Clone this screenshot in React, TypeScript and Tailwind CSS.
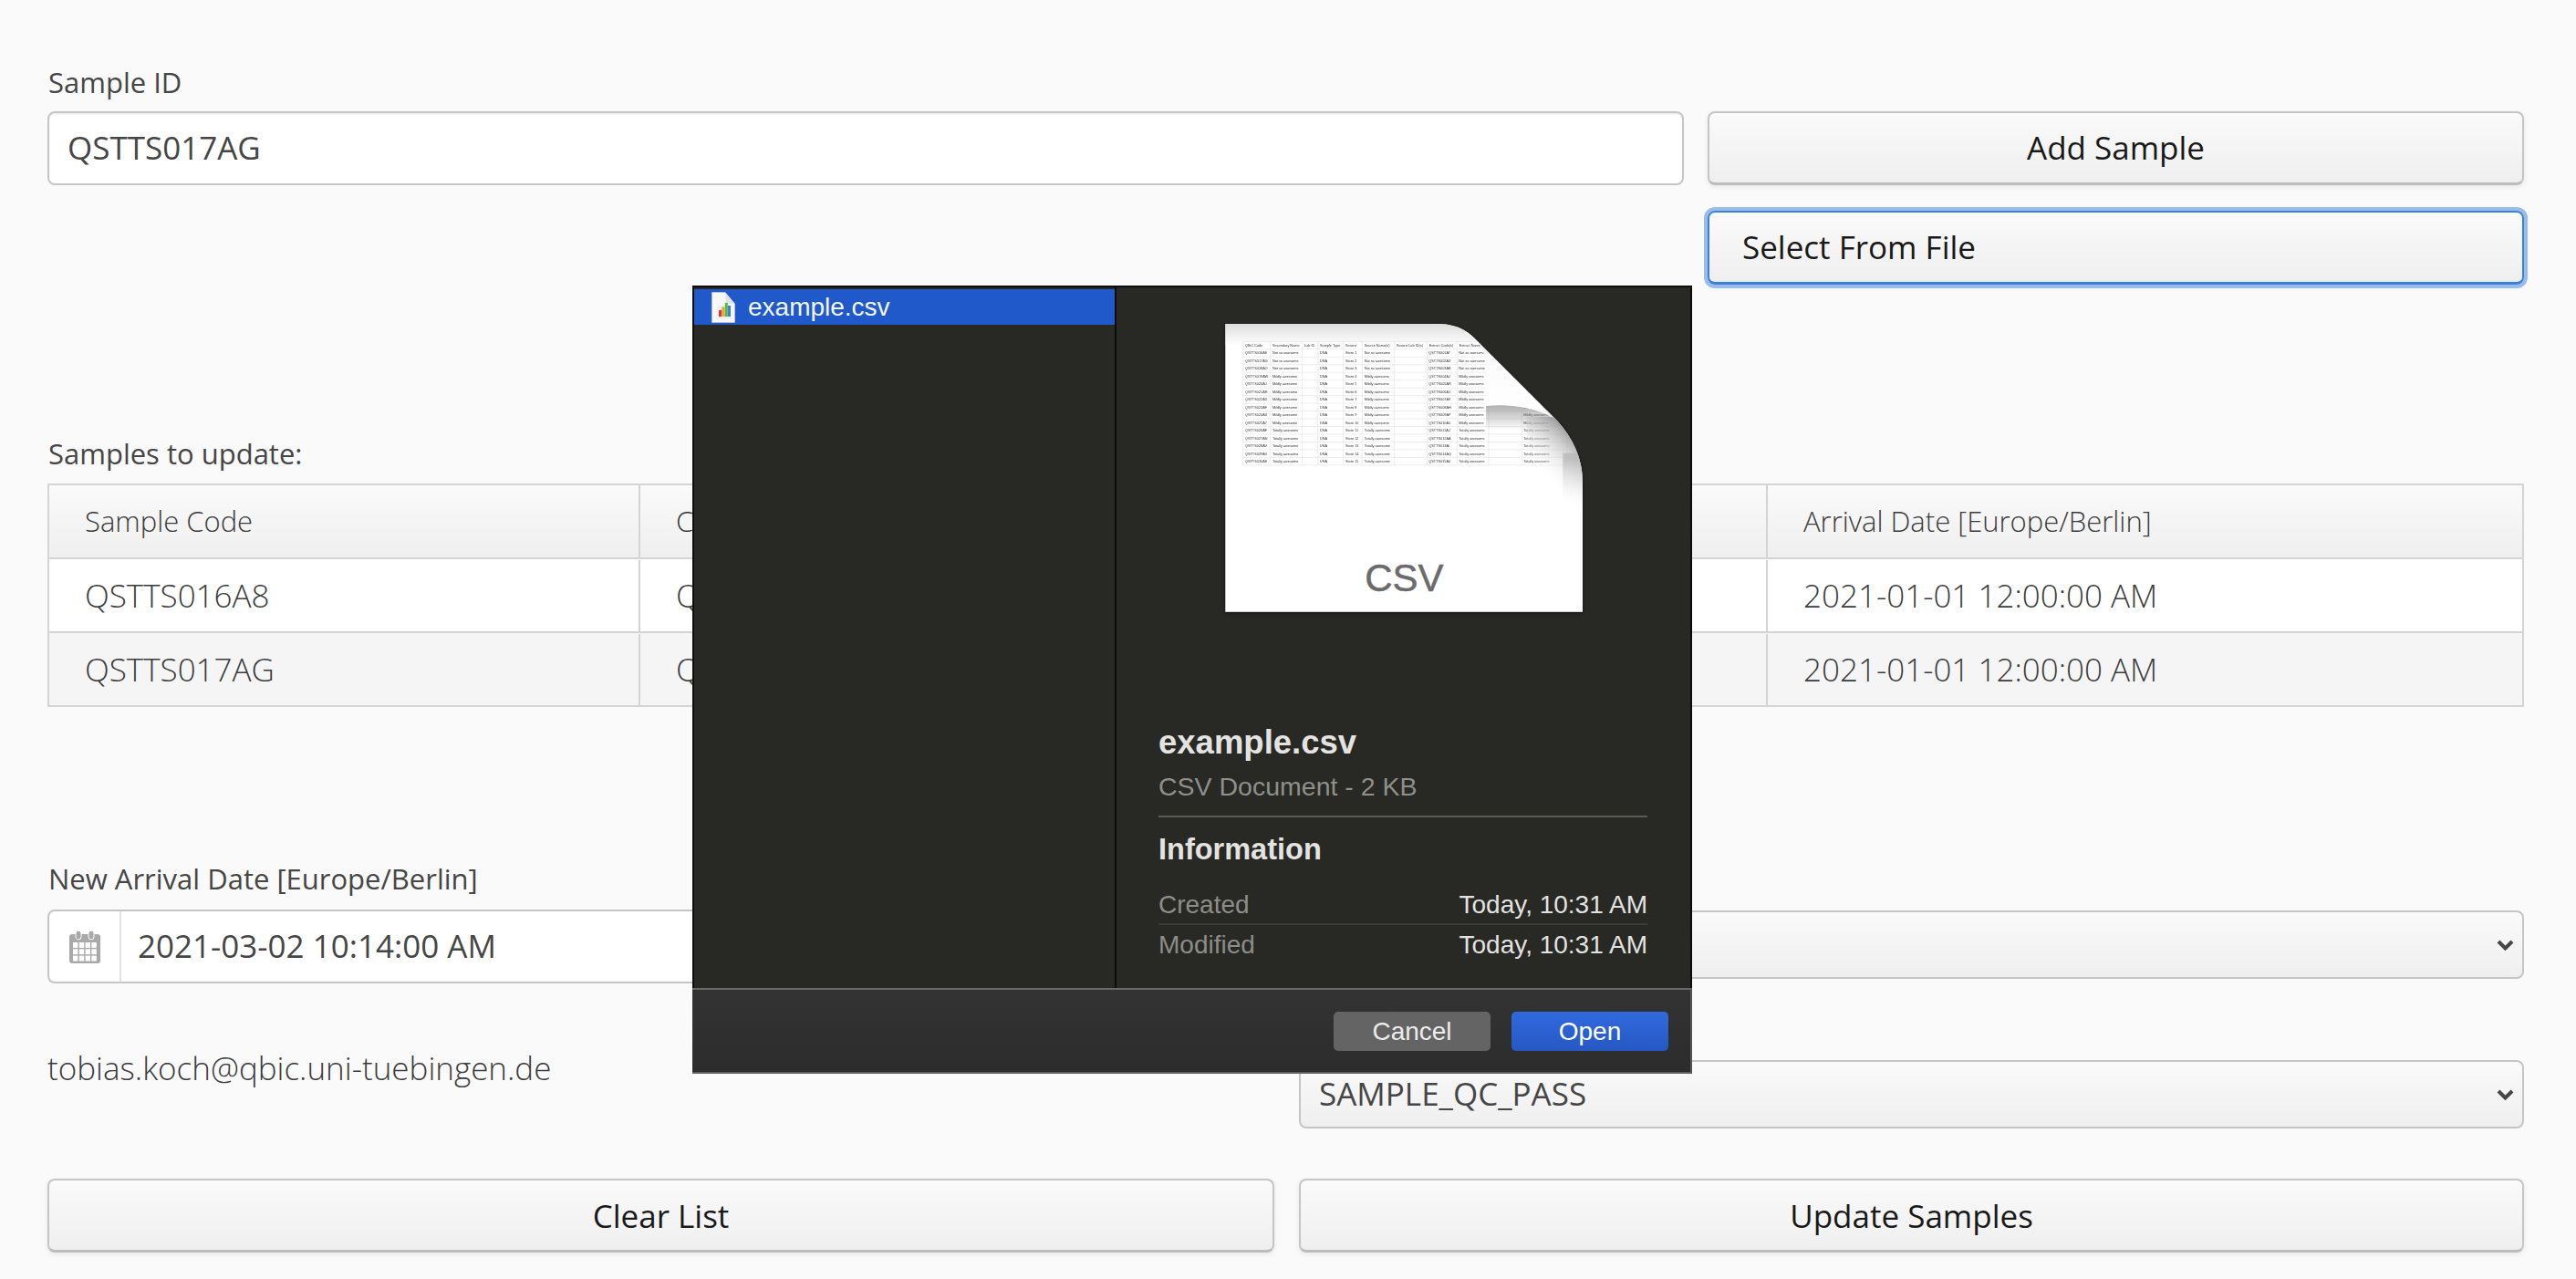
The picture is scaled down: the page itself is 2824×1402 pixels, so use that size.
import React from "react";

const BTN =
  "flex items-center justify-center h-[81px] rounded-[8px] border-2 border-b-[3px] border-[#c5c5c5] border-b-[#bcbcbc] bg-linear-to-b from-[#fafafa] to-[#efefef] text-[#191919] text-[35px] shadow-[0_2px_6px_rgba(0,0,0,0.08)] [font-family:'Open_Sans',sans-serif]";

function Chevron() {
  return (
    <svg width="19" height="12" viewBox="0 0 19 12" className="shrink-0">
      <path d="M2 2 L9.5 9.5 L17 2" fill="none" stroke="#464646" strokeWidth="4" />
    </svg>
  );
}

function SelectBox({ value }: { value?: string }) {
  return (
    <div className="flex items-center justify-between h-[75px] rounded-[8px] border-2 border-[#c5c5c5] bg-linear-to-b from-[#fafafa] to-[#efefef] pl-[20px] pr-[9px] text-[35px] text-[#464646]">
      <span>{value}</span>
      <Chevron />
    </div>
  );
}

function CalendarIcon() {
  const cells = [];
  for (let r = 0; r < 3; r++) {
    for (let c = 0; c < 4; c++) {
      cells.push(<rect key={`${r}-${c}`} x={4 + c * 6.8} y={13 + r * 7.3} width="5.4" height="5.9" fill="#fff" />);
    }
  }
  return (
    <svg width="34" height="36" viewBox="0 0 34 36">
      <rect x="0" y="4" width="34" height="32" rx="3" fill="#a9a9a9" />
      {cells}
      <rect x="7" y="0" width="6" height="10" rx="3" fill="#a9a9a9" stroke="#fff" strokeWidth="1" />
      <rect x="21" y="0" width="6" height="10" rx="3" fill="#a9a9a9" stroke="#fff" strokeWidth="1" />
    </svg>
  );
}

function SmallFile() {
  return (
    <svg width="26" height="34" viewBox="0 0 26 34" className="shrink-0">
      <path d="M0.5 0.5 H15 L25.5 13 V33.5 H0.5 Z" fill="#f7f7f7" stroke="#d0d0d0" strokeWidth="0.6" />
      <path d="M15 0.5 L25.5 13 H16 Z" fill="#e2e2e2" />
      <rect x="6" y="15" width="15" height="14" rx="2" fill="#ededed" />
      <rect x="8" y="20" width="3" height="7" fill="#d9363f" />
      <rect x="11.4" y="16.5" width="3" height="10.5" fill="#e9a52a" />
      <rect x="14.8" y="12" width="3" height="15" fill="#4fb848" />
      <rect x="18" y="15" width="3" height="12" fill="#3d7fd9" />
    </svg>
  );
}

const colX = [218, 308, 413, 464, 548, 610, 716, 823, 922, 1026, 1135, 1285];
const header = ["QBiC Code", "Secondary Name", "Lab ID", "Sample Type", "Source", "Source Name(s)", "Source Lab ID(s)", "Extract Code(s)", "Extract Name", "", "Extract"];
const codes = ["QSTTS016A8", "QSTTS017AG", "QSTTS018AO", "QSTTS019AW", "QSTTS020AJ", "QSTTS021AR", "QSTTS022AX", "QSTTS023AF", "QSTTS024AX", "QSTTS025A7", "QSTTS026AF", "QSTTS027AN", "QSTTS028AV", "QSTTS029A3", "QSTTS030A8"];
const ext = ["QSTTS001AT", "QSTTS002A3", "QSTTS003AB", "QSTTS004AJ", "QSTTS005AR", "QSTTS006A1", "QSTTS007A9", "QSTTS008AH", "QSTTS009AP", "QSTTS010A5", "QSTTS011AJ", "QSTTS012AA", "QSTTS013AI", "QSTTS014AQ", "QSTTS015A0"];
const kind = (i: number) => (i < 3 ? "Not so awesome" : i < 10 ? "Mildly awesome" : "Totally awesome");

function PreviewIcon() {
  const top = 133;
  const rowH = 25.4;
  const sheet = "M160 75 H850 C915 75 950 92 985 128 L1230 372 C1300 440 1335 510 1335 600 V1022 H160 Z";
  const f = { fontFamily: "'Liberation Sans', sans-serif", fontSize: 11.5, fill: "#333" };
  return (
    <svg width="470" height="360" viewBox="0 0 1410 1080" className="block">
      <defs>
        <linearGradient id="topShade" x1="0" y1="0" x2="0" y2="1">
          <stop offset="0" stopColor="#dedede" />
          <stop offset="1" stopColor="#ffffff" />
        </linearGradient>
        <linearGradient id="underFlap" gradientUnits="userSpaceOnUse" x1="0" y1="345" x2="0" y2="425">
          <stop offset="0" stopColor="#808080" stopOpacity="0.6" />
          <stop offset="1" stopColor="#808080" stopOpacity="0" />
        </linearGradient>
        <linearGradient id="sideShade" gradientUnits="userSpaceOnUse" x1="1320" y1="440" x2="1195" y2="570">
          <stop offset="0" stopColor="#8c8c8c" stopOpacity="0.95" />
          <stop offset="0.5" stopColor="#cfcfcf" stopOpacity="0.55" />
          <stop offset="1" stopColor="#ffffff" stopOpacity="0" />
        </linearGradient>
        <linearGradient id="sideFade" gradientUnits="userSpaceOnUse" x1="0" y1="520" x2="0" y2="680">
          <stop offset="0" stopColor="#b5b5b5" stopOpacity="0.7" />
          <stop offset="1" stopColor="#ffffff" stopOpacity="0" />
        </linearGradient>
        <linearGradient id="flap" gradientUnits="userSpaceOnUse" x1="0" y1="110" x2="0" y2="390">
          <stop offset="0" stopColor="#e4e4e4" />
          <stop offset="0.3" stopColor="#fbfbfb" />
          <stop offset="0.85" stopColor="#ffffff" />
          <stop offset="1" stopColor="#ececec" />
        </linearGradient>
        <filter id="sheetShadow" x="-10%" y="-10%" width="120%" height="120%">
          <feDropShadow dx="0" dy="4" stdDeviation="8" floodColor="#000" floodOpacity="0.45" />
        </filter>
        <filter id="soft" x="-2%" y="-2%" width="104%" height="104%">
          <feGaussianBlur stdDeviation="1.2" />
        </filter>
        <clipPath id="sheetClip">
          <path d={sheet} />
        </clipPath>
      </defs>
      <path d={sheet} fill="#fff" filter="url(#sheetShadow)" />
      <g clipPath="url(#sheetClip)">
        <rect x="160" y="75" width="1175" height="70" fill="url(#topShade)" />
        <g filter="url(#soft)">
          {Array.from({ length: 17 }).map((_, i) => (
            <line key={i} x1="218" x2="1285" y1={top + i * rowH} y2={top + i * rowH} stroke="#e4e4e4" strokeWidth="2" />
          ))}
          {colX.map((x) => (
            <line key={x} x1={x} x2={x} y1={top} y2={top + 16 * rowH} stroke="#e4e4e4" strokeWidth="2" />
          ))}
          {header.map((h, i) => (
            <text key={i} x={colX[i] + 7} y={top + 17} {...f}>{h}</text>
          ))}
          {codes.map((c, i) => {
            const y = top + (i + 1) * rowH + 17;
            return (
              <g key={c}>
                <text x={225} y={y} {...f}>{c}</text>
                <text x={315} y={y} {...f}>{kind(i)}</text>
                <text x={471} y={y} {...f}>DNA</text>
                <text x={555} y={y} {...f}>{`Store ${i + 1}`}</text>
                <text x={617} y={y} {...f}>{kind(i)}</text>
                <text x={829} y={y} {...f}>{ext[i]}</text>
                <text x={928} y={y} {...f}>{kind(i)}</text>
                <text x={1141} y={y} {...f}>{kind(i)}</text>
              </g>
            );
          })}
        </g>
        <rect x="1017" y="340" width="320" height="90" fill="url(#underFlap)" />
        <rect x="1150" y="380" width="190" height="320" fill="url(#sideShade)" />
        <rect x="1270" y="500" width="70" height="190" fill="url(#sideFade)" />
      </g>
      <path
        d="M968 110 C1000 140 1017 175 1017 215 V345 C1080 338 1170 345 1240 385 L985 128 Z"
        fill="url(#flap)"
      />
      <text x="748" y="955" textAnchor="middle" fontFamily="'Liberation Sans', sans-serif" fontSize="126" fill="#6b6b6b" stroke="#6b6b6b" strokeWidth="1.5">CSV</text>
    </svg>
  );
}

function Dialog() {
  return (
    <div className="absolute left-[759px] top-[313px] w-[1096px] h-[864px] flex flex-col bg-[#282824] border-x-2 border-t-[2px] border-[#0c0c0b] text-[#e4e4e2] [font-family:'Liberation_Sans',sans-serif]">
      <div className="flex flex-1 min-h-0">
        <div className="w-[463px] pt-[2px] border-r-2 border-[#0c0c0b] shrink-0">
          <div className="flex items-center h-[39px] pl-[19px] gap-[14px] bg-[#2059c9] text-[28px] text-[#f4f6fb]">
            <SmallFile />
            <span>example.csv</span>
          </div>
        </div>
        <div className="flex-1 flex flex-col">
          <div className="ml-[66px] mt-[15px] h-[360px]">
            <PreviewIcon />
          </div>
          <div className="ml-[46px] mr-[47px] flex flex-col">
            <div className="mt-[102px] h-[44px] flex items-center text-[36.5px] font-bold text-[#e3e3e1]">example.csv</div>
            <div className="mt-[8px] h-[36px] flex items-center text-[28.5px] text-[#8f8f8b]">CSV Document - 2 KB</div>
            <div className="mt-[14px] h-[2px] bg-[#5b5b55]" />
            <div className="mt-[15px] h-[40px] flex items-center text-[32.5px] font-bold text-[#e3e3e1]">Information</div>
            <div className="mt-[22px] h-[41px] pb-[2px] flex items-center justify-between text-[28px] border-b-2 border-[#3a3a36]">
              <span className="text-[#8d8d89]">Created</span>
              <span className="text-[#e2e2e0]">Today, 10:31 AM</span>
            </div>
            <div className="mt-[2px] h-[40px] flex items-center justify-between text-[28px]">
              <span className="text-[#8d8d89]">Modified</span>
              <span className="text-[#e2e2e0]">Today, 10:31 AM</span>
            </div>
          </div>
        </div>
      </div>
      <div className="h-[94px] shrink-0 flex items-start justify-end gap-[23px] pr-[24px] pt-[24px] border-t-2 border-[#6a6a68] border-b-2 border-b-[#5f5f5d] -mx-[2px] border-r-2 border-r-[#555553] bg-linear-to-b from-[#333333] to-[#2c2c2c]">
        <div className="flex items-center justify-center w-[172px] h-[43px] rounded-[5px] bg-[#646464] text-[28px] text-[#ececec]">Cancel</div>
        <div className="flex items-center justify-center w-[172px] h-[43px] rounded-[5px] bg-linear-to-b from-[#3169de] to-[#2558c3] text-[28px] text-white">Open</div>
      </div>
    </div>
  );
}

function Row({ a, b, c, even, header }: { a: string; b: string; c: string; even?: boolean; header?: boolean }) {
  const tone = header
    ? "bg-linear-to-b from-[#fafafa] to-[#efefef] text-[31px]"
    : even
      ? "bg-[#f5f5f5] text-[35px] pt-[1px]"
      : "bg-white text-[35px] pt-[1px]";
  const cell = "flex items-center pl-[39px] border-r-2 border-[#d4d4d4] last:border-r-0";
  return (
    <div className={`grid grid-cols-[648px_1236px_1fr] h-[81px] last:h-[79px] text-[#3c3c3c] font-light border-b-2 border-[#d4d4d4] last:border-b-0 ${tone}`}>
      <div className={cell}>{a}</div>
      <div className={cell}>{b}</div>
      <div className={cell}>{c}</div>
    </div>
  );
}

export default function App() {
  return (
    <div className="relative w-[2824px] h-[1402px] overflow-hidden bg-[#fafafa] pl-[52px] pr-[57px] [font-family:'Open_Sans',sans-serif]">
      <div className="pt-[68px] pl-[1px] h-[122px] text-[31px] leading-[44px] text-[#464646]">Sample ID</div>

      <div className="grid grid-cols-[1794px_1fr] gap-x-[26px]">
        <div className="h-[81px] flex items-center rounded-[8px] border-2 border-[#c5c5c5] bg-white pl-[20px] text-[35px] text-[#464646] shadow-[inset_0_2px_2px_rgba(0,0,0,0.06)]">
          QSTTS017AG
        </div>
        <div className="flex flex-col gap-[28px]">
          <div className={BTN}>Add Sample</div>
          <div className={`${BTN} !justify-start pl-[36px] !border-[#3b80dd] ring-[4px] ring-[#9abce9]`}>Select From File</div>
        </div>
      </div>

      <div className="mt-[163px] pl-[1px] h-[44px] leading-[44px] text-[31px] text-[#464646]">Samples to update:</div>
      <div className="mt-[11px] border-2 border-[#d4d4d4]">
        <Row header a="Sample Code" b="C" c="Arrival Date [Europe/Berlin]" />
        <Row a="QSTTS016A8" b="Q" c="2021-01-01 12:00:00 AM" />
        <Row even a="QSTTS017AG" b="Q" c="2021-01-01 12:00:00 AM" />
      </div>

      <div className="mt-[166px] grid grid-cols-[1345px_1fr] gap-x-[27px]">
        <div className="flex flex-col">
          <div className="h-[44px] pl-[1px] leading-[44px] text-[31px] text-[#464646] whitespace-nowrap">New Arrival Date [Europe/Berlin]</div>
          <div className="mt-[12px] h-[81px] flex rounded-[8px] border-2 border-[#c5c5c5] bg-white text-[35px] text-[#464646]">
            <div className="w-[79px] shrink-0 flex items-center justify-center border-r-2 border-[#e2e2e2]">
              <CalendarIcon />
            </div>
            <div className="flex items-center pl-[18px]">2021-03-02 10:14:00 AM</div>
          </div>
          <div className="mt-[71px] h-[44px] leading-[44px] text-[35px] font-light text-[#3c3c3c]">tobias.koch@qbic.uni-tuebingen.de</div>
          <div className={`${BTN} mt-[99px] pt-[2px]`}>Clear List</div>
        </div>
        <div className="flex flex-col pt-[57px]">
          <SelectBox />
          <div className="mt-[89px]">
            <SelectBox value="SAMPLE_QC_PASS" />
          </div>
          <div className={`${BTN} mt-[55px] pt-[2px]`}>Update Samples</div>
        </div>
      </div>

      <Dialog />
    </div>
  );
}
